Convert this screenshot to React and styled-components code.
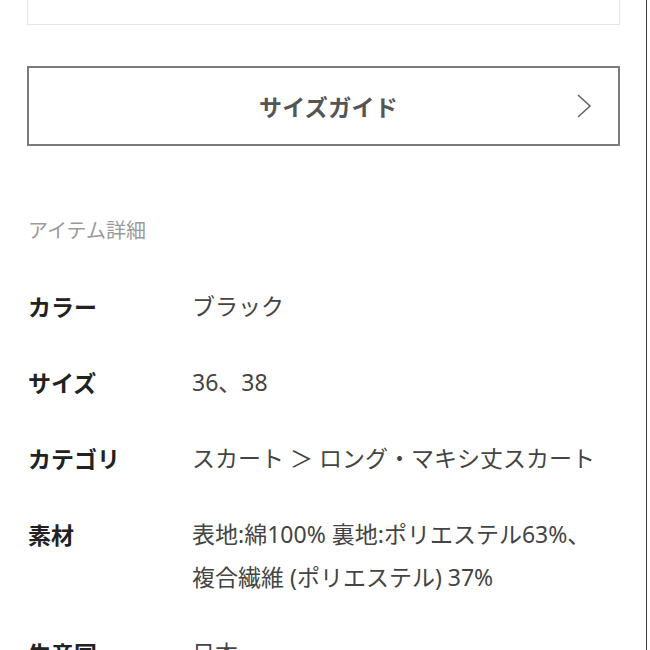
import React from "react";
import styled, { createGlobalStyle } from "styled-components";

const Global = createGlobalStyle`
  html, body { margin: 0; padding: 0; background: #fff; }
  body { font-family: "Noto Sans", "Noto Sans CJK JP", sans-serif; overflow: hidden; }
`;

const Page = styled.div`
  width: 647px;
  height: 650px;
  border-right: 1px solid #3a3a3a;
  box-sizing: border-box;
  padding: 0 26px 0 27px;
  overflow: hidden;
`;

const TopBox = styled.div`
  height: 25px;
  border: 1px solid #e6e6e6;
  border-top: none;
  box-sizing: border-box;
`;

const GuideButton = styled.button`
  margin-top: 41px;
  width: 100%;
  height: 80px;
  border: 2px solid #7c7c7c;
  background: #fff;
  box-sizing: border-box;
  display: flex;
  align-items: center;
  justify-content: center;
  position: relative;
  padding: 0 0 0 10px;
  font-family: "Noto Sans CJK JP", sans-serif;
  font-size: 23px;
  font-weight: 700;
  color: #555;
  letter-spacing: 0.3px;
`;

const Chevron = styled.svg`
  position: absolute;
  right: 26px;
  top: 50%;
  transform: translateY(-50%);
`;

const SectionTitle = styled.div`
  margin-top: 69px;
  font-family: "Noto Sans CJK JP", sans-serif;
  font-size: 20px;
  line-height: 30px;
  color: #9a9a9a;
  padding-left: 1px;
`;

const List = styled.dl`
  margin: 40px 0 0;
  display: grid;
  grid-template-columns: 165px 1fr;
  row-gap: 33px;
`;

const Label = styled.dt`
  font-family: "Noto Sans CJK JP", sans-serif;
  font-size: 23px;
  line-height: 43px;
  font-weight: 700;
  color: #222;
  padding-left: 1px;
`;

const Value = styled.dd`
  margin: 0;
  font-size: 23px;
  line-height: 43px;
  color: #444;
  white-space: pre-line;
`;

const rows = [
  ["カラー", "ブラック"],
  ["サイズ", "36、38"],
  ["カテゴリ", "スカート ＞ ロング・マキシ丈スカート"],
  ["素材", "表地:綿100% 裏地:ポリエステル63%、\n複合繊維 (ポリエステル) 37%"],
  ["生産国", "日本"],
];

export default function App() {
  return (
    <>
      <Global />
      <Page>
        <TopBox />
        <GuideButton>
          サイズガイド
          <Chevron width="16" height="26" viewBox="0 0 16 26" fill="none">
            <polyline points="2,2 14,13 2,24" stroke="#666" strokeWidth="1.6" />
          </Chevron>
        </GuideButton>
        <SectionTitle>アイテム詳細</SectionTitle>
        <List>
          {rows.map(([k, v]) => (
            <React.Fragment key={k}>
              <Label>{k}</Label>
              <Value>{v}</Value>
            </React.Fragment>
          ))}
        </List>
      </Page>
    </>
  );
}
